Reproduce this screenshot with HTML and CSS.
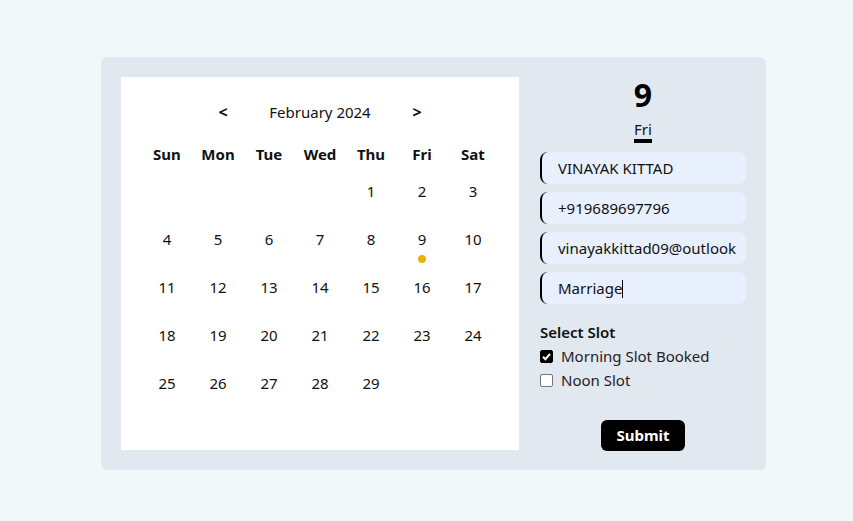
FILE: index.html
```
<!DOCTYPE html>
<html>
<head>
<meta charset="utf-8">
<link rel="stylesheet" href="styles.css">
</head>
<body>
<div class="page">
  <div class="card">
    <div class="calendar">
      <div class="cal-head">
        <span class="nav">&lt;</span>
        <span class="month">February 2024</span>
        <span class="nav">&gt;</span>
      </div>
      <div class="grid">
        <div class="dow">Sun</div><div class="dow">Mon</div><div class="dow">Tue</div><div class="dow">Wed</div><div class="dow">Thu</div><div class="dow">Fri</div><div class="dow">Sat</div>
        <div class="day"></div><div class="day"></div><div class="day"></div><div class="day"></div><div class="day">1</div><div class="day">2</div><div class="day">3</div>
        <div class="day">4</div><div class="day">5</div><div class="day">6</div><div class="day">7</div><div class="day">8</div><div class="day sel">9<span class="dot"></span></div><div class="day">10</div>
        <div class="day">11</div><div class="day">12</div><div class="day">13</div><div class="day">14</div><div class="day">15</div><div class="day">16</div><div class="day">17</div>
        <div class="day">18</div><div class="day">19</div><div class="day">20</div><div class="day">21</div><div class="day">22</div><div class="day">23</div><div class="day">24</div>
        <div class="day">25</div><div class="day">26</div><div class="day">27</div><div class="day">28</div><div class="day">29</div><div class="day"></div><div class="day"></div>
      </div>
    </div>
    <div class="side">
      <div class="date-num">9</div>
      <div class="date-day"><span>Fri</span></div>
      <div class="fields">
        <div class="field">VINAYAK KITTAD</div>
        <div class="field">+919689697796</div>
        <div class="field">vinayakkittad09@outlook</div>
        <div class="field">Marriage<span class="caret"></span></div>
      </div>
      <div class="slots">
        <div class="slot-title">Select Slot</div>
        <label class="slot"><span class="box checked"><svg viewBox="0 0 13 13" width="13" height="13"><path d="M3 6.8 L5.4 9.2 L10 3.8" fill="none" stroke="#fff" stroke-width="2"/></svg></span>Morning Slot Booked</label>
        <label class="slot"><span class="box"></span>Noon Slot</label>
      </div>
      <div class="submit-wrap"><span class="submit">Submit</span></div>
    </div>
  </div>
</div>
</body>
</html>
```
FILE: styles.css
```
* { box-sizing: border-box; }
html, body { margin: 0; padding: 0; }
body {
  background: #f1f8fa;
  font-family: "Noto Sans", "Open Sans", sans-serif;
  color: #111;
  width: 853px;
  height: 521px;
}
.page { padding-top: 57px; padding-left: 101px; }
.card {
  width: 665px;
  height: 413px;
  background: #e2e8f0;
  border-radius: 6px;
  padding: 20px;
  display: flex;
  gap: 21px;
}
.calendar {
  width: 398px;
  height: 373px;
  background: #fff;
  padding-top: 23px;
}
.cal-head {
  display: flex;
  justify-content: center;
  align-items: center;
  height: 24px;
  font-size: 15px;
}
.nav { font-weight: 700; font-size: 16px; width: 20px; text-align: center; }
.month { width: 174px; text-align: center; }
.grid {
  margin: 20px auto 0;
  width: 357px;
  display: grid;
  grid-template-columns: repeat(7, 51px);
  grid-template-rows: 32px;
  grid-auto-rows: 48px;
}
.dow { font-weight: 700; font-size: 15px; text-align: center; line-height: 20px; }
.day { font-size: 15px; text-align: center; line-height: 20px; position: relative; padding-top: 5px; }
.dot {
  position: absolute;
  left: 50%;
  top: 31px;
  width: 8px;
  height: 8px;
  margin-left: -4px;
  border-radius: 50%;
  background: #eab308;
}
.side { width: 206px; display: flex; flex-direction: column; }
.date-num { text-align: center; font-size: 32px; font-weight: 700; line-height: 36px; color: #000; }
.date-day { text-align: center; margin-top: 6px; line-height: 20px; font-size: 15px; }
.date-day span { display: inline-block; border-bottom: 4px solid #000; line-height: 19px; }
.fields { display: flex; flex-direction: column; gap: 8px; margin-top: 9px; }
.field {
  height: 32px;
  background: #e8f0fe;
  border-left: 2px solid #000;
  border-radius: 8px;
  padding-left: 16px;
  font-size: 15px;
  line-height: 32px;
  white-space: nowrap;
  overflow: hidden;
  color: #111;
}
.caret { display: inline-block; width: 1px; height: 18px; background: #000; vertical-align: -4px; }
.slots { margin-top: 18px; }
.slot-title { font-weight: 600; font-size: 15px; line-height: 20px; margin-bottom: 2px; }
.slot { display: flex; align-items: center; font-size: 15px; line-height: 24px; color: #222; }
.box {
  width: 13px; height: 13px;
  border: 1px solid #767676;
  border-radius: 2px;
  background: #fff;
  margin-right: 8px;
  display: inline-flex;
}
.box.checked { background: #000; border-color: #000; }
.box svg { margin: -1px; }
.submit-wrap { text-align: center; margin-top: 28px; }
.submit {
  display: inline-block;
  background: #000;
  color: #fff;
  font-weight: 700;
  font-size: 15px;
  line-height: 31px;
  padding: 0 15px;
  border-radius: 6px;
}
```
